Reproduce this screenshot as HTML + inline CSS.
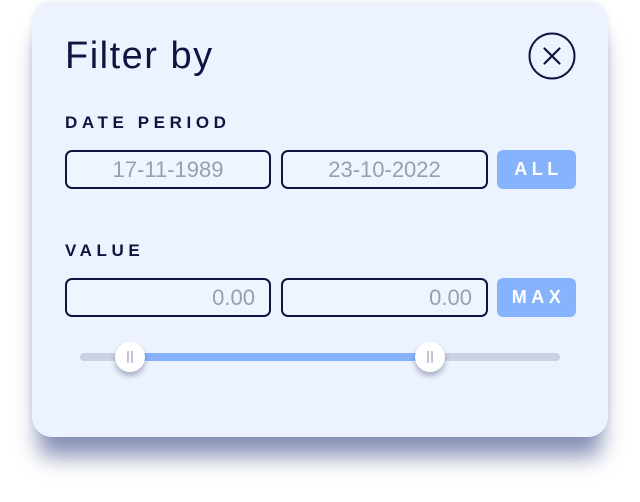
<!DOCTYPE html>
<html><head><style>
*{margin:0;padding:0;box-sizing:border-box}
body{width:640px;height:502px;background:#fff;position:relative;overflow:hidden;font-family:"Liberation Sans",sans-serif}
.card{position:absolute;left:32px;top:2px;width:576px;height:435px;background:#edf3fe;border-radius:20px;box-shadow:0 26px 22px -6px rgba(60,75,135,0.6),0 0 6px rgba(150,165,200,0.25)}
.t{position:absolute;left:65px;top:35px;font-size:38px;color:#0d1540;letter-spacing:1.5px}
.lbl{position:absolute;left:65px;font-size:17px;font-weight:bold;color:#0d1540;letter-spacing:4.6px}
.in{position:absolute;height:39px;border:2px solid #0d1540;border-radius:7px;background:#eff5fe;color:#97a0b3;font-size:22px;line-height:35px}
.btn{position:absolute;left:497px;width:79px;height:39px;background:#86b3fb;border-radius:6px;color:#fff;font-weight:bold;font-size:18px;letter-spacing:4.5px;text-align:center;line-height:39px;padding-left:4px}
.track{position:absolute;left:80px;top:353px;width:480px;height:8px;border-radius:4px;background:#cbd1e0}
.fill{position:absolute;left:130px;top:353px;width:300px;height:8px;background:#86b3fb}
.th{position:absolute;top:342px;width:30px;height:30px;border-radius:50%;background:#fff;box-shadow:0 4px 6px rgba(40,50,90,0.35)}
.th:before,.th:after{content:"";position:absolute;top:9px;width:2px;height:12px;background:#c0c6d4}
.th:before{left:12px}.th:after{left:16px}
</style></head><body>
<div class="card"></div>
<div class="t">Filter by</div>
<svg style="position:absolute;left:528px;top:32px" width="48" height="48"><circle cx="24" cy="24" r="22.5" fill="none" stroke="#0d1540" stroke-width="2"/><path d="M16.5 16.5L31.5 31.5M31.5 16.5L16.5 31.5" stroke="#0d1540" stroke-width="2.2" stroke-linecap="round"/></svg>
<div class="lbl" style="top:113px">DATE PERIOD</div>
<div class="in" style="left:65px;top:150px;width:206px;text-align:center">17-11-1989</div>
<div class="in" style="left:281px;top:150px;width:207px;text-align:center">23-10-2022</div>
<div class="btn" style="top:150px">ALL</div>
<div class="lbl" style="top:241px">VALUE</div>
<div class="in" style="left:65px;top:278px;width:206px;text-align:right;padding-right:14px">0.00</div>
<div class="in" style="left:281px;top:278px;width:207px;text-align:right;padding-right:14px">0.00</div>
<div class="btn" style="top:278px">MAX</div>
<div class="track"></div><div class="fill"></div>
<div class="th" style="left:115px"></div>
<div class="th" style="left:415px"></div>
</body></html>
